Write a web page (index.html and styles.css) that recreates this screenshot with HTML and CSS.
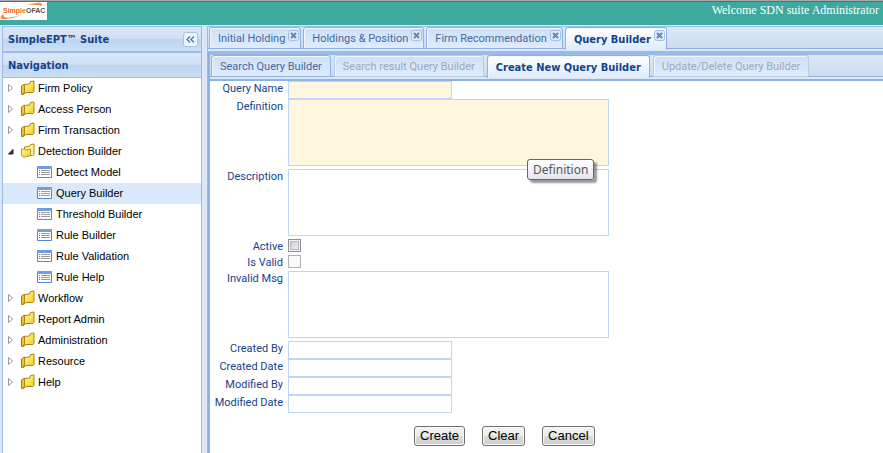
FILE: index.html
```html
<!DOCTYPE html>
<html lang="en">
<head>
<meta charset="utf-8">
<title>SimpleEPT Suite</title>
<link rel="stylesheet" href="styles.css">
</head>
<body>
<svg class="defs" aria-hidden="true">
  <defs>
    <linearGradient id="gold" x1="0" y1="0" x2="1" y2="1">
      <stop offset="0" stop-color="#fff79a"/><stop offset=".5" stop-color="#fbe45c"/><stop offset="1" stop-color="#eec030"/>
    </linearGradient>
    <symbol id="folder" viewBox="0 0 16 16">
      <path d="M.5 6 3.500 4V12l-1.500 2.500H.5z" fill="#f0c23c" stroke="#a9780c"/>
      <path d="M3.500 4.500 8.500 4l1-2.500 3.500-.5v10.500l-1 1H5l-3 2 1.500-2.500z" fill="url(#gold)" stroke="#b08410"/>
    </symbol>
    <symbol id="folder-open" viewBox="0 0 16 16">
      <path d="M3.500 6V4l5-.5 1-2 3.500-.5v10.500l-1.500 1H5z" fill="#fff3a0" stroke="#b08410"/>
      <path d="M.5 6h2.500l1.500 1 5-1v6.500l-5 1.500H2L.5 12z" fill="url(#gold)" stroke="#c6991f"/>
    </symbol>
    <symbol id="form" viewBox="0 0 16 16">
      <path d="M.5 2.500h14v11H.5z" fill="#fff" stroke="#5b86c4"/>
      <path d="M0 2h15v3H0z" fill="#6fa0dd"/>
      <path d="M2 6.500h1M2 8.500h1M2 10.500h1" stroke="#4f7fc4"/>
      <path d="M4 6.500h9M4 8.500h9M4 10.500h9" stroke="#9a9a9a"/>
    </symbol>
    <symbol id="closed" viewBox="0 0 8 10"><path d="M1.500 1.500v7L5.500 5z" fill="#fff" stroke="#999"/></symbol>
    <symbol id="opened" viewBox="0 0 8 10"><path d="M6 3.500V8H1.500z" fill="#444" stroke="#222" stroke-linejoin="round"/></symbol>
    <symbol id="close" viewBox="0 0 11 11">
      <rect x=".5" y=".5" width="10" height="10" rx="2" fill="#deeafa" stroke="#9fbfe8"/>
      <path d="m3 3 5 5m0-5L3 8" stroke="#6785ad" stroke-width="2"/>
    </symbol>
  </defs>
</svg>

<header class="banner">
  <svg class="logo" viewBox="0 0 47 18" role="img" aria-label="SimpleOFAC">
    <rect width="47" height="18" fill="#fff"/>
    <path d="M28 3C36 0 42 0 42 2.500q0 1-1 2 0-2.500-13-1.500" fill="#f58a3c"/>
    <path d="M4 11c-6 5-4 7.500 6 5.500 5-1 9-2.500 11-4-7 3-21 6-17-1.500" fill="#f58a3c"/>
    <text x="3" y="11"><tspan class="logo-a">Simple</tspan><tspan class="logo-b">OFAC</tspan></text>
  </svg>
  <p class="welcome">Welcome SDN suite Administrator</p>
</header>

<div class="workspace">
  <aside class="sidebar">
    <div class="bar">
      <h1>SimpleEPT™ Suite</h1>
      <button class="collapse" type="button" aria-label="Collapse">
        <svg viewBox="0 0 15 15"><path d="M7 4 3.500 7.500 7 11M11.500 4 8 7.500l3.500 3.500" fill="none" stroke="#4a78b5" stroke-width="1.500"/></svg>
      </button>
    </div>
    <div class="bar bar-nav"><h2>Navigation</h2></div>
    <nav>
      <ul class="tree">
        <li><a href="#"><svg class="arrow"><use href="#closed"/></svg><svg class="icon"><use href="#folder"/></svg>Firm Policy</a></li>
        <li><a href="#"><svg class="arrow"><use href="#closed"/></svg><svg class="icon"><use href="#folder"/></svg>Access Person</a></li>
        <li><a href="#"><svg class="arrow"><use href="#closed"/></svg><svg class="icon"><use href="#folder"/></svg>Firm Transaction</a></li>
        <li><a href="#"><svg class="arrow"><use href="#opened"/></svg><svg class="icon"><use href="#folder-open"/></svg>Detection Builder</a>
          <ul>
            <li><a href="#"><svg class="icon"><use href="#form"/></svg>Detect Model</a></li>
            <li><a href="#" class="selected"><svg class="icon"><use href="#form"/></svg>Query Builder</a></li>
            <li><a href="#"><svg class="icon"><use href="#form"/></svg>Threshold Builder</a></li>
            <li><a href="#"><svg class="icon"><use href="#form"/></svg>Rule Builder</a></li>
            <li><a href="#"><svg class="icon"><use href="#form"/></svg>Rule Validation</a></li>
            <li><a href="#"><svg class="icon"><use href="#form"/></svg>Rule Help</a></li>
          </ul>
        </li>
        <li><a href="#"><svg class="arrow"><use href="#closed"/></svg><svg class="icon"><use href="#folder"/></svg>Workflow</a></li>
        <li><a href="#"><svg class="arrow"><use href="#closed"/></svg><svg class="icon"><use href="#folder"/></svg>Report Admin</a></li>
        <li><a href="#"><svg class="arrow"><use href="#closed"/></svg><svg class="icon"><use href="#folder"/></svg>Administration</a></li>
        <li><a href="#"><svg class="arrow"><use href="#closed"/></svg><svg class="icon"><use href="#folder"/></svg>Resource</a></li>
        <li><a href="#"><svg class="arrow"><use href="#closed"/></svg><svg class="icon"><use href="#folder"/></svg>Help</a></li>
      </ul>
    </nav>
  </aside>

  <main class="content">
    <div class="tabs main-tabs">
      <div class="tab closable"><button type="button">Initial Holding</button><button class="close" type="button" aria-label="Close"><svg><use href="#close"/></svg></button></div>
      <div class="tab closable"><button type="button">Holdings &amp; Position</button><button class="close" type="button" aria-label="Close"><svg><use href="#close"/></svg></button></div>
      <div class="tab closable"><button type="button">Firm Recommendation</button><button class="close" type="button" aria-label="Close"><svg><use href="#close"/></svg></button></div>
      <div class="tab closable active"><button type="button">Query Builder</button><button class="close" type="button" aria-label="Close"><svg><use href="#close"/></svg></button></div>
    </div>
    <div class="panel">
      <div class="tabs">
        <div class="tab"><button type="button">Search Query Builder</button></div>
        <div class="tab disabled"><button type="button" disabled>Search result Query Builder</button></div>
        <div class="tab active"><button type="button">Create New Query Builder</button></div>
        <div class="tab disabled"><button type="button" disabled>Update/Delete Query Builder</button></div>
      </div>
      <form class="form">
        <div class="row"><label for="name">Query Name</label><input id="name" type="text" class="required"></div>
        <div class="row area"><label for="definition">Definition</label>
          <div class="field"><textarea id="definition" class="required"></textarea><span class="tooltip" role="tooltip">Definition</span></div></div>
        <div class="row area"><label for="description">Description</label><textarea id="description"></textarea></div>
        <div class="row check"><label for="active">Active</label><input id="active" type="checkbox"></div>
        <div class="row check"><label for="valid">Is Valid</label><input id="valid" type="checkbox" disabled></div>
        <div class="row area"><label for="invalid">Invalid Msg</label><textarea id="invalid"></textarea></div>
        <div class="row"><label for="cby">Created By</label><input id="cby" type="text"></div>
        <div class="row"><label for="cdate">Created Date</label><input id="cdate" type="text"></div>
        <div class="row"><label for="mby">Modified By</label><input id="mby" type="text"></div>
        <div class="row"><label for="mdate">Modified Date</label><input id="mdate" type="text"></div>
        <div class="actions">
          <button type="button">Create</button>
          <button type="button">Clear</button>
          <button type="button">Cancel</button>
        </div>
      </form>
    </div>
  </main>
</div>
</body>
</html>
```
FILE: styles.css
```css
* { box-sizing: border-box; }

body {
  margin: 0;
  min-height: 100vh;
  display: flex;
  flex-direction: column;
  background: #dbe7f6;
  font: 11px/16px "Liberation Sans", sans-serif;
  color: #000;
}

h1, h2, p, ul { margin: 0; padding: 0; }
ul { list-style: none; }
a { color: inherit; text-decoration: none; }
button { font: inherit; color: inherit; }
.defs { position: absolute; width: 0; height: 0; }

.banner {
  display: flex;
  justify-content: space-between;
  height: 25px;
  border-top: 1px solid #a9a9a9;
  background: #3ea99f;
  box-shadow: inset 0 1px #3b6fb0;
}
.logo { width: 47px; height: 18px; margin-top: 1px; }
.logo text { font: bold 7px "Liberation Sans", sans-serif; }
.logo-a { fill: #f26a1b; }
.logo-b { fill: #555; }
.welcome {
  padding-right: 4px;
  font: 12px/18px "Liberation Serif", serif;
  color: #fff;
}

.workspace {
  flex: 1;
  display: flex;
  gap: 5px;
  padding: 1px 0 0 2px;
}

.sidebar {
  width: 200px;
  flex: none;
  border: 1px solid #99bbe8;
  border-bottom: 0;
  background: #fff;
}
.bar {
  display: flex;
  align-items: center;
  justify-content: space-between;
  height: 25px;
  padding: 0 3px 0 5px;
  border-bottom: 1px solid #99bbe8;
  background: linear-gradient(#dbe7f7, #cfdff3 48%, #bdd3ee 50%, #cbdff6);
}
.bar-nav { height: 26px; border-top: 1px solid #99bbe8; }
.bar h1, .bar h2 {
  padding-top: 2px;
  font: bold 11px/16px "DejaVu Sans Condensed", "DejaVu Sans", sans-serif;
  color: #15428b;
}
.collapse {
  width: 15px;
  height: 15px;
  padding: 0;
  border: 1px solid #a5c4ec;
  border-radius: 3px;
  background: #eef5fe;
}
.collapse svg { display: block; width: 13px; height: 13px; }

.tree a { display: flex; align-items: center; height: 21px; padding: 0 0 2px 4px; }
.tree ul a { padding-left: 34px; }
.tree .selected { background: #d9e8fb; }
.arrow { width: 8px; height: 10px; margin-right: 6px; }
.icon { width: 16px; height: 16px; margin-right: 1px; }
.tree ul .icon { margin-right: 3px; }

.content {
  flex: 1;
  min-width: 0;
  display: flex;
  flex-direction: column;
  border-left: 1px solid #99bbe8;
  font: 11px/16px Roboto, sans-serif;
}
.tabs {
  display: flex;
  align-items: flex-end;
  gap: 3px;
  height: 25px;
  padding: 0 1px;
  border-top: 1px solid #99bbe8;
  background:
    linear-gradient(#8db2e3, #8db2e3) 0 21px / 100% 1px no-repeat,
    linear-gradient(#dde8f5 0 0) 0 22px / 100% 3px no-repeat,
    linear-gradient(#dde8f6, #c9daee);
}
.main-tabs { gap: 2px; }
.tab {
  display: flex;
  height: 22px;
  margin-bottom: 2px;
  padding: 1px 8px 0;
  border: 1px solid #8db2e3;
  border-radius: 3px 3px 0 0;
  background: linear-gradient(#cfe0f6, #deebfd);
  box-shadow: inset 1px 1px #f2f7fe;
  color: #416aa3;
}
.tab button { padding: 0; border: 0; background: none; white-space: nowrap; }
.closable { padding-right: 1px; }
.tab .close { width: 11px; height: 11px; margin: 1px 0 0 3px; }
.close svg { display: block; width: 11px; height: 11px; }
.active {
  height: 23px;
  margin-bottom: 1px;
  border-bottom: 0;
  background: linear-gradient(#fff, #deebfd);
  color: #15428b;
  font-family: "DejaVu Sans Condensed", "DejaVu Sans", sans-serif;
  font-weight: bold;
}
.disabled { border-color: #b4cdee; color: #9ba9bc; }

.panel {
  flex: 1;
  display: flex;
  flex-direction: column;
  border-left: 2px solid #8db2e3;
  border-top: 3px solid #99bbe8;
}
.form {
  flex: 1;
  border-top: 2px solid #8db2e3;
  background: #fff;
  color: #15428b;
}
.row { display: flex; height: 18px; }
.row label { width: 73px; margin-right: 5px; text-align: right; white-space: nowrap; }
.row input[type="text"], .row textarea {
  display: block;
  width: 164px;
  height: 18px;
  margin: 0;
  padding: 1px 3px;
  border: 1px solid #c0d5fb;
  border-radius: 0;
  background: #fff;
  font: inherit;
}
.area { height: 70px; }
.row textarea { width: 321px; height: 67px; resize: none; }
.row .required[class] { background: #fff6df; }
.check { height: 16px; }
.row input[type="checkbox"] {
  appearance: none;
  width: 13px;
  height: 13px;
  margin: 0;
  border: 1px solid #8e8f8f;
  background: linear-gradient(135deg, #c3c8d4, #f6f6f6) center / 9px 9px no-repeat #f4f4f4;
  box-shadow: inset 0 0 0 1px #f4f4f4, inset 0 0 0 2px #b4b8c0;
}
.row input[type="checkbox"]:disabled { border-color: #b1b1b1; background: #f8f8f8; box-shadow: none; }

.field { position: relative; }
.tooltip {
  position: absolute;
  left: 239px;
  top: 60px;
  z-index: 1;
  padding: 1px 5px;
  border: 1px solid #666;
  border-radius: 3px;
  background: linear-gradient(#fff, #e4e5f0);
  box-shadow: 3px 3px 2px rgba(0, 0, 0, .4);
  font: 12px/17px "Noto Sans", sans-serif;
  color: #575757;
}
.actions { display: flex; gap: 17px; padding: 13px 0 0 204px; }
.actions button {
  height: 20px;
  padding: 0 5px;
  border: 1px solid #707070;
  border-radius: 3px;
  background: linear-gradient(#f4f4f4, #ebebeb 49%, #dadada 51%, #cfcfcf);
  box-shadow: inset 0 0 0 1px #f8f8f8;
  font: 13px/16px "Liberation Sans", sans-serif;
  color: #000;
}
```
